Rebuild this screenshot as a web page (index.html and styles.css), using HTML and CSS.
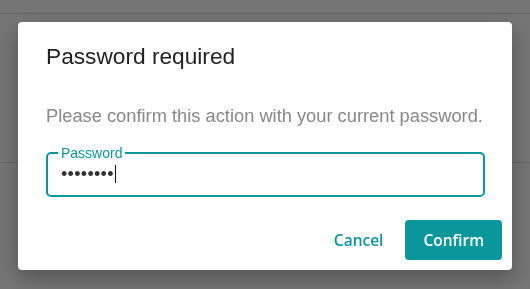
FILE: index.html
```html
<!DOCTYPE html>
<html lang="en">
<head>
  <meta charset="UTF-8">
  <meta name="viewport" content="width=device-width, initial-scale=1.0">
  <title>Password required</title>
  <link rel="stylesheet" href="styles.css">
</head>
<body>
  <header class="topbar"></header>
  <div class="page">
    <div class="panel"></div>
  </div>

  <div class="overlay">
    <div class="dialog" role="dialog" aria-labelledby="dlg-title">
      <h2 id="dlg-title">Password required</h2>
      <p class="hint">Please confirm this action with your current password.</p>
      <fieldset class="field">
        <legend>Password</legend>
        <div class="value" aria-label="Password">••••••••<span class="caret"></span></div>
      </fieldset>
      <div class="actions">
        <button class="btn btn-text">Cancel</button>
        <button class="btn btn-primary">Confirm</button>
      </div>
    </div>
  </div>
</body>
</html>
```

FILE: styles.css
```css
body {
  margin: 0;
  font-family: "Liberation Sans", Arial, sans-serif;
  background: #f4f4f4;
  height: 289px;
  overflow: hidden;
}
.topbar {
  height: 13px;
  background: #f4f4f4;
  border-bottom: 1px solid #cfcfcf;
}
.page {
  height: 148px;
  border-bottom: 1px solid #d6d6d6;
}
.overlay {
  position: fixed;
  inset: 0;
  background: rgba(0, 0, 0, 0.52);
  display: flex;
  justify-content: center;
  align-items: flex-start;
}
.dialog {
  width: 494px;
  margin-top: 22px;
  background: #fff;
  border-radius: 4px;
  box-shadow: 0 8px 22px rgba(0, 0, 0, 0.3);
  padding: 21px 0 10px;
  box-sizing: border-box;
}
.dialog h2 {
  margin: 0 28px;
  font-size: 22.7px;
  font-weight: normal;
  line-height: 26px;
  color: #222;
}
.hint {
  margin: 36px 28px 0;
  font-size: 18.3px;
  line-height: 21px;
  color: #888;
  white-space: nowrap;
}
.field {
  margin: 19px 27px 0 28px;
  padding: 0 13px;
  border: 2px solid #0b979c;
  border-radius: 5px;
  height: 52px;
  box-sizing: border-box;
}
.field legend {
  padding: 0 3px;
  margin-left: -3px;
  font-size: 14px;
  line-height: 16px;
  color: #0b979c;
}
.value {
  display: flex;
  align-items: center;
  margin-top: 2px;
  height: 22px;
  font-size: 18px;
  letter-spacing: 0.3px;
  color: #333;
}
.caret {
  display: inline-block;
  width: 1px;
  height: 18px;
  margin-left: 1px;
  background: #111;
}
.actions {
  display: flex;
  justify-content: flex-end;
  gap: 4px;
  margin-top: 23px;
  padding-right: 10px;
}
.btn {
  font-family: "Open Sans", sans-serif;
  font-weight: 600;
  font-size: 15.5px;
  height: 40px;
  padding: 0 18px;
  border: none;
  border-radius: 4px;
  cursor: pointer;
}
.btn-text {
  background: none;
  color: #0b969c;
}
.btn-primary {
  background: #0a979c;
  color: #fff;
}
```
